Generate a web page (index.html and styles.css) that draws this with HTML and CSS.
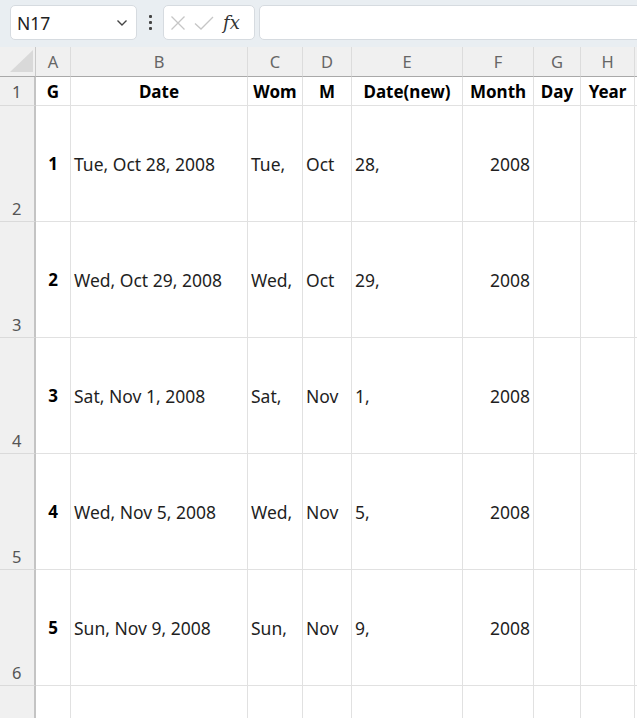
FILE: index.html
```html
<!DOCTYPE html>
<html lang="en">

<head>
  <meta charset="UTF-8">
  <title>Sheet</title>
  <link rel="stylesheet" href="styles.css">
</head>

<body>
  <div class="toolbar">
    <div class="name-box">
      <span>N17</span>
      <svg class="chevron" width="12" height="8" viewBox="0 0 12 8"><path d="M1.5 1.5 L6 6 L10.5 1.5" fill="none" stroke="#444" stroke-width="1.4"/></svg>
    </div>
    <div class="kebab"><i></i><i></i><i></i></div>
    <div class="fx-box">
      <svg width="16" height="16" viewBox="0 0 16 16"><path d="M1.5 1.5 L14.5 14.5 M14.5 1.5 L1.5 14.5" stroke="#c6c6c6" stroke-width="1.3" fill="none"/></svg>
      <svg width="20" height="16" viewBox="0 0 20 16"><path d="M1 8.5 L7 14 L19 2" stroke="#c6c6c6" stroke-width="1.3" fill="none"/></svg>
      <span class="fx">fx</span>
    </div>
    <div class="formula"></div>
  </div>

  <div class="sheet">
    <div class="corner"><div class="tri"></div></div>
    <div class="colhead">A</div>
    <div class="colhead">B</div>
    <div class="colhead">C</div>
    <div class="colhead">D</div>
    <div class="colhead">E</div>
    <div class="colhead">F</div>
    <div class="colhead">G</div>
    <div class="colhead">H</div>
    <div class="colhead tail"></div>

    <div class="rowhead short">1</div>
    <div class="cell bold center">G</div>
    <div class="cell bold center">Date</div>
    <div class="cell bold center">Wom</div>
    <div class="cell bold center">M</div>
    <div class="cell bold center">Date(new)</div>
    <div class="cell bold center">Month</div>
    <div class="cell bold center">Day</div>
    <div class="cell bold center">Year</div>
    <div class="cell tail"></div>

    <div class="rowhead">2</div>
    <div class="cell bold center">1</div>
    <div class="cell">Tue, Oct 28, 2008</div>
    <div class="cell">Tue,</div>
    <div class="cell">Oct</div>
    <div class="cell">28,</div>
    <div class="cell right">2008</div>
    <div class="cell"></div>
    <div class="cell"></div>
    <div class="cell tail"></div>

    <div class="rowhead">3</div>
    <div class="cell bold center">2</div>
    <div class="cell">Wed, Oct 29, 2008</div>
    <div class="cell">Wed,</div>
    <div class="cell">Oct</div>
    <div class="cell">29,</div>
    <div class="cell right">2008</div>
    <div class="cell"></div>
    <div class="cell"></div>
    <div class="cell tail"></div>

    <div class="rowhead">4</div>
    <div class="cell bold center">3</div>
    <div class="cell">Sat, Nov 1, 2008</div>
    <div class="cell">Sat,</div>
    <div class="cell">Nov</div>
    <div class="cell">1,</div>
    <div class="cell right">2008</div>
    <div class="cell"></div>
    <div class="cell"></div>
    <div class="cell tail"></div>

    <div class="rowhead">5</div>
    <div class="cell bold center">4</div>
    <div class="cell">Wed, Nov 5, 2008</div>
    <div class="cell">Wed,</div>
    <div class="cell">Nov</div>
    <div class="cell">5,</div>
    <div class="cell right">2008</div>
    <div class="cell"></div>
    <div class="cell"></div>
    <div class="cell tail"></div>

    <div class="rowhead">6</div>
    <div class="cell bold center">5</div>
    <div class="cell">Sun, Nov 9, 2008</div>
    <div class="cell">Sun,</div>
    <div class="cell">Nov</div>
    <div class="cell">9,</div>
    <div class="cell right">2008</div>
    <div class="cell"></div>
    <div class="cell"></div>
    <div class="cell tail"></div>

    <div class="rowhead"></div>
    <div class="cell"></div>
    <div class="cell"></div>
    <div class="cell"></div>
    <div class="cell"></div>
    <div class="cell"></div>
    <div class="cell"></div>
    <div class="cell"></div>
    <div class="cell"></div>
    <div class="cell tail"></div>
  </div>
</body>

</html>
```

FILE: styles.css
```css
* {
  margin: 0;
  padding: 0;
  box-sizing: border-box;
}

body {
  font-family: 'Noto Sans', 'Open Sans', sans-serif;
  background: #ffffff;
  color: #1f1f1f;
  width: 637px;
  height: 718px;
  overflow: hidden;
}

/* formula bar */
.toolbar {
  display: flex;
  align-items: center;
  height: 47px;
  padding: 5px 0 7px 10px;
  background: #e9eef2;
}

.name-box,
.fx-box,
.formula {
  height: 35px;
  background: #ffffff;
  border: 1px solid #d6dbe0;
  border-radius: 5px;
}

.name-box {
  width: 127px;
  display: flex;
  align-items: center;
  justify-content: space-between;
  padding: 0 8px 0 6px;
  font-size: 17.5px;
  color: #222;
}

.kebab {
  width: 26px;
  display: flex;
  flex-direction: column;
  align-items: center;
  gap: 3px;
}

.kebab i {
  width: 3px;
  height: 3px;
  background: #444;
  border-radius: 1px;
}

.fx-box {
  width: 92px;
  display: flex;
  align-items: center;
  gap: 8px;
  padding-left: 6px;
}

.fx {
  font-family: 'DejaVu Serif', 'Liberation Serif', serif;
  font-style: italic;
  font-size: 18px;
  color: #333;
  margin-left: 1px;
}

.formula {
  flex: 1;
  margin-left: 4px;
  margin-right: -6px;
}

/* grid */
.sheet {
  display: grid;
  grid-template-columns: 36px 35px 177px 55px 49px 111px 71px 47px 54px 20px;
  grid-template-rows: 30px 29px repeat(5, 116px) 60px;
  font-size: 17.5px;
}

.corner {
  background: #f0f0f0;
  border-bottom: 1px solid #a9a9a9;
  border-right: 1px solid #c9c9c9;
  padding: 3px 2px 3px 10px;
}

.tri {
  width: 23px;
  height: 22px;
  background: #d9d9d9;
  clip-path: polygon(100% 0, 100% 100%, 0 100%);
}

.colhead {
  background: #f0f0f0;
  border-bottom: 1px solid #a9a9a9;
  border-right: 1px solid #dcdcdc;
  color: #666;
  font-size: 16.5px;
  display: flex;
  align-items: center;
  justify-content: center;
}

.rowhead {
  background: #f0f0f0;
  border-right: 2px solid #c4c4c4;
  border-bottom: 1px solid #dadada;
  color: #555;
  font-size: 16.5px;
  display: flex;
  align-items: flex-end;
  padding: 0 0 1px 12px;
}

.rowhead.short {
  align-items: center;
  padding-bottom: 0;
}

.cell {
  border-right: 1px solid #e1e1e1;
  border-bottom: 1px solid #e1e1e1;
  display: flex;
  align-items: center;
  padding: 0 3px;
  white-space: nowrap;
  overflow: hidden;
}

.bold {
  font-weight: 700;
  font-size: 17px;
  color: #000;
}

.center {
  justify-content: center;
}

.right {
  justify-content: flex-end;
}

.tail {
  border-right: none;
}
```
